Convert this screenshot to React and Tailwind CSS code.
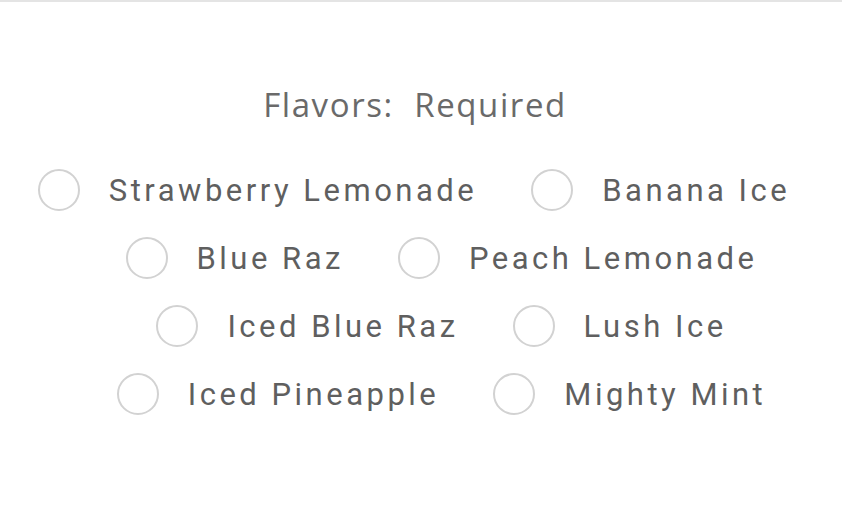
const rows = [
  { items: ['Strawberry Lemonade', 'Banana Ice'], shift: 'pr-[14px]' },
  { items: ['Blue Raz', 'Peach Lemonade'], shift: 'pl-[41px]' },
  { items: ['Iced Blue Raz', 'Lush Ice'], shift: 'pl-[41px]' },
  { items: ['Iced Pineapple', 'Mighty Mint'], shift: 'pl-[41px]' },
];

function Option({ label }) {
  return (
    <label className="flex items-center gap-[29px] cursor-pointer">
      <span className="w-[42px] h-[42px] rounded-full border-2 border-[#d2d2d2] bg-white shrink-0" />
      <span className="text-[31px] leading-none tracking-[3.5px] text-[#5f5f5f]">{label}</span>
    </label>
  );
}

export default function App() {
  return (
    <div className="w-[842px] h-[517px] bg-white border-t-2 border-[#e4e4e4] font-['Roboto',sans-serif]">
      <div className="pt-[86px] flex justify-center">
        <h2 className="text-[33px] leading-none tracking-[1.6px] text-[#6a6a6a] font-['Open_Sans',sans-serif] pr-[12px]">
          Flavors:&nbsp; Required
        </h2>
      </div>
      <div className="mt-[48px] flex flex-col gap-[26px]">
        {rows.map((row, i) => (
          <div key={i} className={`flex justify-center gap-[54px] ${row.shift}`}>
            {row.items.map((it) => (
              <Option key={it} label={it} />
            ))}
          </div>
        ))}
      </div>
    </div>
  );
}
